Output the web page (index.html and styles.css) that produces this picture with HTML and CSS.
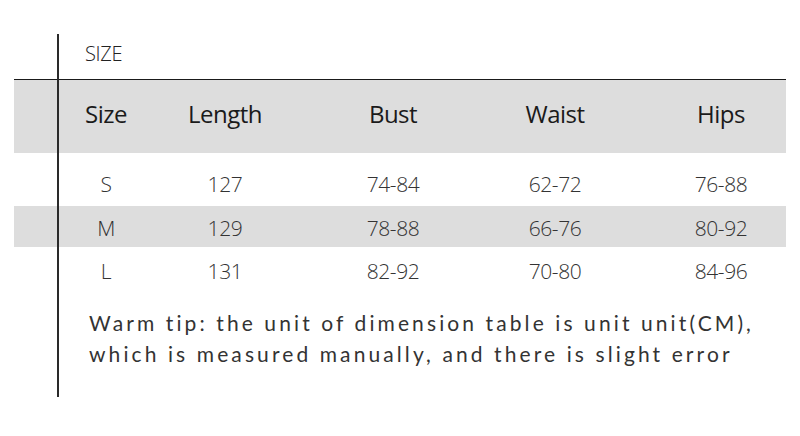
FILE: index.html
```html
<!DOCTYPE html>
<html>
<head>
<meta charset="utf-8">
<link rel="stylesheet" href="styles.css">
</head>
<body>
<div class="page">
  <div class="vline"></div>
  <div class="title">SIZE</div>
  <div class="table">
    <div class="row head">
      <div class="c">Size</div><div class="c">Length</div><div class="c">Bust</div><div class="c">Waist</div><div class="c last">Hips</div>
    </div>
    <div class="row r1">
      <div class="c">S</div><div class="c">127</div><div class="c">74-84</div><div class="c">62-72</div><div class="c last">76-88</div>
    </div>
    <div class="row r2 shade">
      <div class="c">M</div><div class="c">129</div><div class="c">78-88</div><div class="c">66-76</div><div class="c last">80-92</div>
    </div>
    <div class="row r3">
      <div class="c">L</div><div class="c">131</div><div class="c">82-92</div><div class="c">70-80</div><div class="c last">84-96</div>
    </div>
  </div>
  <p class="tip">Warm tip: the unit of dimension table is unit unit(CM),<br>which is measured manually, and there is slight error</p>
</div>
</body>
</html>
```
FILE: styles.css
```css
html, body {
  margin: 0;
  padding: 0;
  background: #ffffff;
}
.page {
  position: relative;
  width: 800px;
  height: 436px;
  overflow: hidden;
  font-family: "Open Sans", "Noto Sans", sans-serif;
  color: #333;
}
.vline {
  position: absolute;
  left: 57px;
  top: 34px;
  width: 2px;
  height: 363px;
  background: #2a2a2a;
  z-index: 2;
}
.title {
  padding: 42px 0 0 85px;
  height: 37px;
  font-size: 20px;
  font-weight: 300;
  line-height: 24px;
  letter-spacing: -0.3px;
  color: #222;
}
.table {
  margin-left: 14px;
  width: 772px;
  border-top: 1px solid #1a1a1a;
}
.row {
  display: grid;
  grid-template-columns: 92px 146px 190px 134px 1fr;
  padding-left: 46px;
  align-items: center;
  font-size: 21px;
  font-weight: 300;
  letter-spacing: -0.4px;
  color: #333;
}
.c {
  text-align: center;
  white-space: nowrap;
}
.c.last {
  padding-left: 34px;
}
.head {
  height: 73px;
  background: #dddddd;
  font-size: 24px;
  font-weight: 400;
  color: #1a1a1a;
  letter-spacing: -0.5px;
  padding-bottom: 6px;
  box-sizing: border-box;
}
.r1 {
  height: 53px;
  padding-top: 8px;
  box-sizing: border-box;
}
.shade {
  background: #dddddd;
}
.r2 {
  height: 41px;
  padding-top: 2px;
  box-sizing: border-box;
}
.r3 {
  height: 48px;
  box-sizing: border-box;
}
.tip {
  margin: 12px 0 0 89px;
  font-family: "Lato", "Open Sans", sans-serif;
  font-size: 21px;
  line-height: 31px;
  letter-spacing: 3.1px;
  color: #333;
}
```
